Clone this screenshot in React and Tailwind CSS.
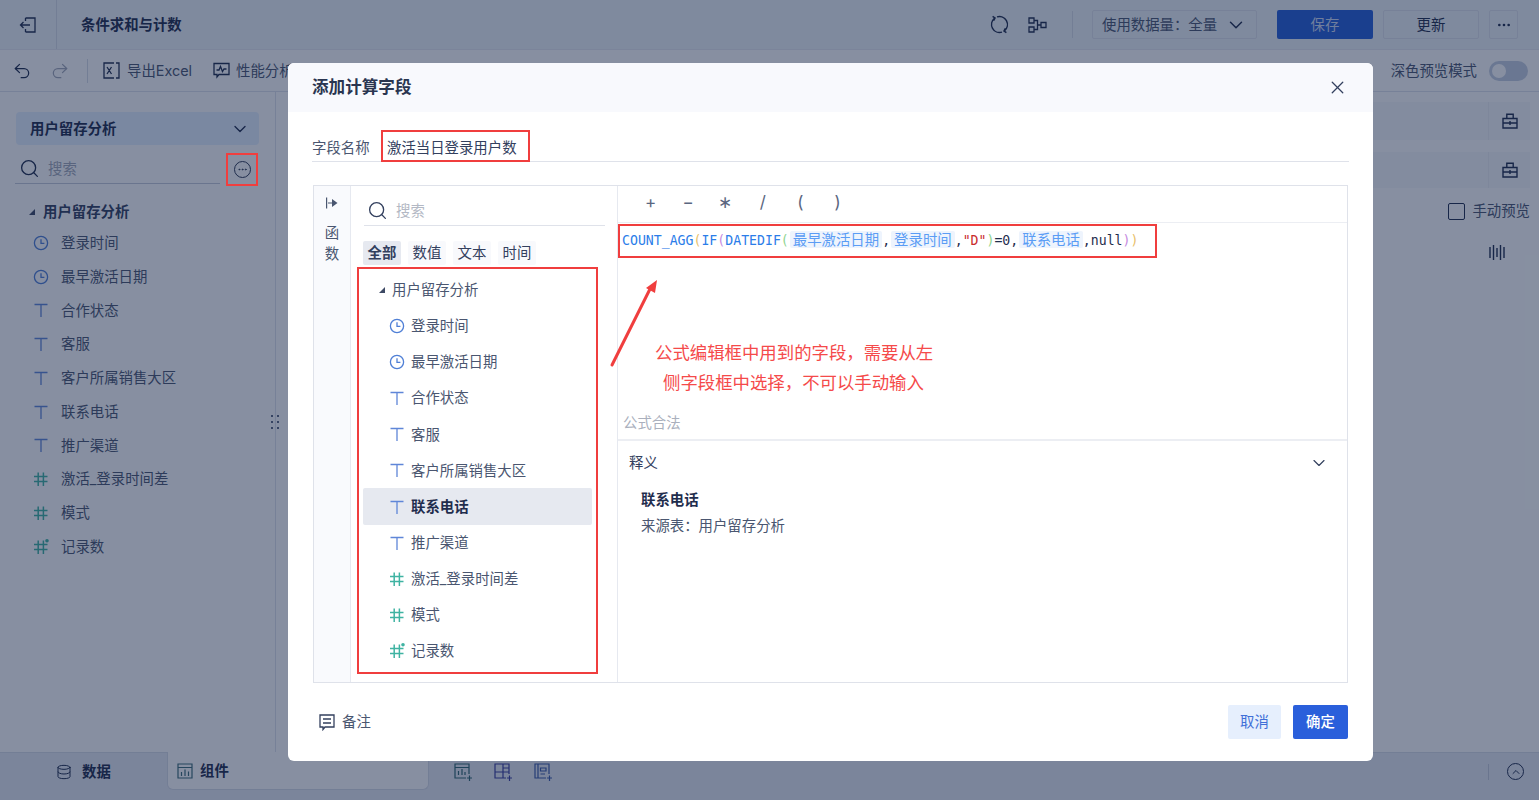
import { Search, ChevronDown, X, Undo2, Redo2, Ellipsis, Database } from "lucide-react";

const fields = [
  { name: "登录时间", type: "time" },
  { name: "最早激活日期", type: "time" },
  { name: "合作状态", type: "text" },
  { name: "客服", type: "text" },
  { name: "客户所属销售大区", type: "text" },
  { name: "联系电话", type: "text" },
  { name: "推广渠道", type: "text" },
  { name: "激活_登录时间差", type: "num" },
  { name: "模式", type: "num" },
  { name: "记录数", type: "calc" },
];

function ClockIcon() {
  return (
    <svg width="16" height="16" viewBox="0 0 16 16" fill="none" stroke="#4f7fd6" strokeWidth="1.3">
      <circle cx="8" cy="8" r="6.6" />
      <path d="M8 4.2V8.4H11.4" />
    </svg>
  );
}

function TextIcon() {
  return (
    <svg width="16" height="16" viewBox="0 0 16 16" fill="none" stroke="#5f86d8" strokeWidth="1.3">
      <path d="M1.5 2.5H14.5M8 2.5V15" />
    </svg>
  );
}

function HashIcon({ dot }) {
  return (
    <svg width="16" height="16" viewBox="0 0 16 16" fill="none" stroke="#3fb3a2" strokeWidth="1.5">
      <path d="M1 5.6H14.5M1 10.6H14.5M5.2 1.5V15M10.4 1.5V15" />
      {dot && <circle cx="14" cy="1.8" r="1.8" fill="#3fb3a2" stroke="none" />}
    </svg>
  );
}

function FieldIcon({ type }) {
  if (type === "time") return <ClockIcon />;
  if (type === "text") return <TextIcon />;
  return <HashIcon dot={type === "calc"} />;
}

function Triangle() {
  return (
    <svg width="8" height="8" viewBox="0 0 8 8" fill="#3d4964">
      <path d="M7 1V7H1Z" />
    </svg>
  );
}

function CardIcon() {
  return (
    <svg width="16" height="16" viewBox="0 0 16 16" fill="none" stroke="#1f2d4d" strokeWidth="1.4">
      <path d="M1 5.5H15V15H1ZM4.8 5.5V1.2H11.2V5.5M1 10H15M8 8V12" />
    </svg>
  );
}

function Sidebar() {
  return (
    <div className="w-[276px] shrink-0 border-r border-[#dfe3ec] pt-[20px] relative">
      <div className="mx-[16px] w-[243px] h-[33px] rounded bg-[#e5f0ff] flex items-center justify-between pl-[14px] pr-[9px] font-semibold text-[#1f2d4d]">
        <span>用户留存分析</span>
        <ChevronDown size={20} strokeWidth={1.6} />
      </div>
      <div className="ml-[15px] mt-[8px] w-[205px] h-[31px] border-b border-[#c5cbd8] flex items-center pl-[4px] pt-[1px] gap-[8px]">
        <Search size={21} strokeWidth={1.5} className="text-[#1f2d4d]" />
        <span className="text-[#a3a9b8]">搜索</span>
      </div>
      <div className="mt-[16px] pl-[28px] flex items-center gap-[7px] h-[24px] font-semibold text-[#33405e]">
        <Triangle />
        <span>用户留存分析</span>
      </div>
      <div className="mt-[2px]">
        {fields.map((f) => (
          <div key={f.name} className="h-[33.75px] flex items-center pl-[33px] gap-[12px] text-[#4a5670]">
            <FieldIcon type={f.type} />
            <span>{f.name}</span>
          </div>
        ))}
      </div>
      <div className="absolute right-[-4px] top-[323px] grid grid-cols-2 gap-x-[4px] gap-y-[4px]">
        {[0, 1, 2, 3, 4, 5].map((i) => (
          <span key={i} className="w-[2px] h-[2px] bg-[#5a6680]" />
        ))}
      </div>
    </div>
  );
}

function RightPanel() {
  return (
    <div className="w-[239px] shrink-0 pt-[10px] pr-[9px]">
      <div className="h-[38px] bg-[#f7f8fb] flex justify-end">
        <div className="w-[42px] border-l border-[#eceef3] flex items-center justify-center">
          <CardIcon />
        </div>
      </div>
      <div className="h-[36px] mt-[12px] bg-[#f7f8fb] flex justify-end">
        <div className="w-[42px] border-l border-[#eceef3] flex items-center justify-center">
          <CardIcon />
        </div>
      </div>
      <div className="h-[28px] mt-[9px] flex items-center justify-end gap-[7px] text-[#4a5670] whitespace-nowrap">
        <span className="w-[17px] h-[17px] border-[1.5px] border-[#1f2d4d] rounded-[2px]" />
        <span>手动预览</span>
      </div>
      <div className="flex justify-end pr-[25px] mt-[19px]">
        <svg width="16" height="17" viewBox="0 0 16 17" fill="none" stroke="#1f2d4d" strokeWidth="1.4">
          <path d="M1 3V14M4.5 1V16M8 4V13M11.5 1V16M15 3V14" />
        </svg>
      </div>
    </div>
  );
}

function Page() {
  return (
    <div className="h-full flex flex-col bg-white">
      {/* top bar */}
      <div className="h-[50px] shrink-0 bg-[#eff4f9] border-b border-[#e6e9f0] flex items-center text-[#1f2d4d]">
        <div className="w-[57px] h-full border-r border-[#d7dce6] flex items-center justify-center">
          <svg width="18" height="18" viewBox="0 0 18 18" fill="none" stroke="#1f2d4d" strokeWidth="1.3">
            <path d="M6.5 2H16V16H6.5M6.5 2V5M6.5 13V16M11 9H1.5M4.5 6L1.5 9L4.5 12" />
          </svg>
        </div>
        <div className="ml-[24px] font-semibold">条件求和与计数</div>
        <div className="ml-auto flex items-center">
          <svg width="19" height="19" viewBox="0 0 19 19" fill="none" stroke="#1f2d4d" strokeWidth="1.5">
            <path d="M7 1.9A8 8 0 0 1 14.5 15.7M12 17.1A8 8 0 0 1 4.5 3.3" />
            <path d="M2.6 1.4L5 3L3.6 5.6M16.4 17.6L14 16L15.4 13.4" />
          </svg>
          <svg className="ml-[19px]" width="19" height="16" viewBox="0 0 19 16" fill="none" stroke="#1f2d4d" strokeWidth="1.3">
            <path d="M1 1H6V6H1ZM1 10H6V15H1ZM13 5.5H18V10.5H13ZM6 3.5H9.5V12.5H6M9.5 8H13" />
          </svg>
          <span className="ml-[25px] w-px h-[27px] bg-[#d7dce6]" />
          <div className="ml-[19px] w-[165px] h-[29px] border border-[#dfe3ec] rounded-[2px] flex items-center justify-between pl-[9px] pr-[9px] text-[#4a5670]">
            <span>使用数据量：全量</span>
            <ChevronDown size={22} strokeWidth={1.6} className="text-[#1f2d4d]" />
          </div>
          <button className="ml-[20px] w-[96px] h-[29px] rounded-[2px] bg-[#255ed9] text-[#cfdcf7]">保存</button>
          <button className="ml-[10px] w-[96px] h-[29px] rounded-[2px] border border-[#dfe3ec]">更新</button>
          <button className="ml-[10px] mr-[21px] w-[29px] h-[29px] rounded-[2px] border border-[#dfe3ec] flex items-center justify-center">
            <Ellipsis size={16} />
          </button>
        </div>
      </div>
      {/* toolbar */}
      <div className="h-[42px] shrink-0 border-b border-[#dfe3ec] flex items-center text-[#4a5670]">
        <Undo2 size={20} strokeWidth={1.5} className="ml-[12px] text-[#1f2d4d]" />
        <Redo2 size={20} strokeWidth={1.5} className="ml-[18px] text-[#a3a9b8]" />
        <span className="ml-[17px] w-px h-[24px] bg-[#d7dce6]" />
        <svg className="ml-[15px]" width="17" height="17" viewBox="0 0 17 17" fill="none" stroke="#1f2d4d" strokeWidth="1.3">
          <path d="M11 1H1V16H11M13 1H16V16H13M4 5L8.5 12M8.5 5L4 12" />
        </svg>
        <span className="ml-[7px]">导出Excel</span>
        <svg className="ml-[21px]" width="17" height="17" viewBox="0 0 17 17" fill="none" stroke="#1f2d4d" strokeWidth="1.3">
          <path d="M1 1.5H16V12.5H6L4 15V12.5H1ZM3.5 8H6L7.5 4.5L9.5 9.5L11 7H13.5" />
        </svg>
        <span className="ml-[6px]">性能分析</span>
        <span className="ml-auto">深色预览模式</span>
        <span className="ml-[12px] mr-[11px] w-[39px] h-[20px] rounded-full bg-[#c5cfe0] flex items-center pl-[3px]">
          <span className="w-[14px] h-[14px] rounded-full bg-white" />
        </span>
      </div>
      {/* body */}
      <div className="flex-1 min-h-0 flex">
        <Sidebar />
        <div className="flex-1" />
        <RightPanel />
      </div>
      {/* bottom tabs */}
      <div className="h-[48px] shrink-0 bg-[#e7eaf3] border-t border-[#d7dce6] flex items-start text-[#1f2d4d] font-semibold">
        <div className="w-[167px] h-[37px] flex items-center justify-center gap-[10px]">
          <Database size={16} strokeWidth={1.5} />
          <span>数据</span>
        </div>
        <div className="w-[262px] h-[38px] -mt-px bg-white border border-t-0 border-[#d7dce6] rounded-b-md flex items-center pl-[9px] gap-[7px]">
          <svg width="16" height="16" viewBox="0 0 16 16" fill="none" stroke="#3d6c78" strokeWidth="1.2">
            <path d="M1 1H15V15H1ZM1 4.5H15M4.5 13V9M8 13V6.5M11.5 13V8.5" />
          </svg>
          <span>组件</span>
        </div>
        <div className="h-[37px] flex items-center gap-[22px] ml-[25px]">
          <svg width="18" height="18" viewBox="0 0 18 18" fill="none" stroke="#2e6670" strokeWidth="1.2">
            <path d="M12 15H1V1H15V11M1 4.5H15M4.5 12V8M8 12V6M11 12V9M13 15H18M15.5 12.5V18" />
          </svg>
          <svg width="18" height="18" viewBox="0 0 18 18" fill="none" stroke="#3b3f9e" strokeWidth="1.2">
            <path d="M12 15H1V1H15V11M9 1V15M1 9H15M9 5H15M13 15H18M15.5 12.5V18" />
          </svg>
          <svg width="18" height="18" viewBox="0 0 18 18" fill="none" stroke="#3a5aa8" strokeWidth="1.2">
            <path d="M12 15H1V1H15V11M4 1V15M6.5 5H12V8H6.5ZM6.5 11H11M13 15H18M15.5 12.5V18" />
          </svg>
        </div>
        <div className="ml-auto h-[37px] flex items-center">
          <span className="w-px h-[16px] bg-[#c5cbd8]" />
          <span className="ml-[18px] mr-[15px] w-[17px] h-[17px] rounded-full border-[1.5px] border-[#1f2d4d] flex items-center justify-center">
            <ChevronDown size={12} strokeWidth={2} className="rotate-180" />
          </span>
        </div>
      </div>
    </div>
  );
}

function Chip({ children }) {
  return <span className="bg-[#eef4fd] text-[#5b9df5] rounded-[2px] px-[3px] ml-[1px] font-['Inter','Noto_Sans_CJK_SC',sans-serif] text-[14.4px]">{children}</span>;
}

function FormulaLine() {
  return (
    <div className="font-['DejaVu_Sans_Mono','Noto_Sans_CJK_SC',monospace] text-[13.2px] text-[#1f2d4d] whitespace-nowrap">
      <span className="text-[#2b7de9]">COUNT_AGG</span>
      <span className="text-[#e8c06a]">(</span>
      <span className="text-[#2b7de9]">IF</span>
      <span className="text-[#c58be0]">(</span>
      <span className="text-[#2b7de9]">DATEDIF</span>
      <span className="text-[#8fd48f]">(</span>
      <Chip>最早激活日期</Chip>
      ,
      <Chip>登录时间</Chip>
      ,<span className="text-[#c92c2c]">"D"</span>
      <span className="text-[#8fd48f]">)</span>=0,
      <Chip>联系电话</Chip>
      ,null
      <span className="text-[#c58be0]">)</span>
      <span className="text-[#e8c06a]">)</span>
    </div>
  );
}

function Modal() {
  return (
    <div className="absolute left-[288px] top-[63px] w-[1085px] h-[698px] bg-white rounded-md flex flex-col overflow-hidden text-[#33405e]">
      <div className="h-[49px] shrink-0 bg-[#f8f9fd] flex items-center justify-between pl-[24px] pr-[25px]">
        <span className="text-[16.6px] font-semibold text-[#2a3550]">添加计算字段</span>
        <X size={21} strokeWidth={1.5} />
      </div>

      {/* field name */}
      <div className="mx-[24px] mt-[18px] h-[32px] flex items-end border-b border-[#dfe2ea]">
        <span className="w-[69px] h-full flex items-center pt-[5px] text-[#4a5670]">字段名称</span>
        <span className="w-[149px] h-[32px] -mb-px border-2 border-[#f03e3e] flex items-center pl-[4px] pt-[4px]">激活当日登录用户数</span>
      </div>

      {/* editor */}
      <div className="mx-[25px] mt-[23px] w-[1035px] h-[498px] border border-[#dfe2ea] flex">
        <div className="w-[37px] shrink-0 bg-[#f9fafd] border-r border-[#e6e9f0] flex flex-col items-center pt-[10px] text-[#4a5670]">
          <svg width="14" height="14" viewBox="0 0 14 14" fill="#4a5670">
            <path d="M1 1.5H2.2V12.5H1ZM3 6.4H7V3L12.5 7L7 11V7.6H3Z" />
          </svg>
          <span className="mt-[12px] leading-[21px] w-[15px] text-center">函数</span>
        </div>

        <div className="w-[267px] shrink-0 border-r border-[#e6e9f0] relative">
          <div className="ml-[13px] mt-[8px] w-[241px] h-[32px] border-b border-[#dfe2ea] flex items-center pl-[3px] pt-[2px] gap-[8px]">
            <Search size={21} strokeWidth={1.5} />
            <span className="text-[#b3b8c4]">搜索</span>
          </div>
          <div className="ml-[12px] mt-[15px] flex gap-[7px]">
            <span className="w-[38px] h-[24px] rounded-[2px] bg-[#e6e9f0] flex items-center justify-center font-semibold">全部</span>
            <span className="w-[38px] h-[24px] rounded-[2px] bg-[#f8f9fc] flex items-center justify-center">数值</span>
            <span className="w-[38px] h-[24px] rounded-[2px] bg-[#f8f9fc] flex items-center justify-center">文本</span>
            <span className="w-[38px] h-[24px] rounded-[2px] bg-[#f8f9fc] flex items-center justify-center">时间</span>
          </div>
          <div className="ml-[6px] mt-[2px] w-[241px] h-[407px] border-2 border-[#f03e3e] pl-[4px] pr-[4px]">
            <div className="h-[39px] flex items-center pl-[15px] pt-[2px] gap-[6px] text-[#4a5670]">
              <Triangle />
              <span>用户留存分析</span>
            </div>
            {fields.map((f) => (
              <div
                key={f.name}
                className={
                  f.name === "联系电话"
                    ? "h-[36.1px] flex items-center pl-[26px] gap-[6px] rounded-[2px] bg-[#e6e9f0] font-semibold text-[#1f2d4d]"
                    : "h-[36.1px] flex items-center pl-[26px] gap-[6px] text-[#4a5670]"
                }
              >
                <FieldIcon type={f.type} />
                <span>{f.name}</span>
              </div>
            ))}
          </div>
        </div>

        <div className="flex-1 min-w-0 flex flex-col">
          <div className="h-[37px] shrink-0 border-b border-[#eceef3] flex items-center pl-[14px] pb-[3px] text-[#5a6680]">
            {["+", "−", "∗", "/", "(", ")"].map((op) => (
              <span key={op} className="w-[37.4px] text-center text-[17px]">{op}</span>
            ))}
          </div>
          <div className="mt-[1px] w-[539px] h-[34px] border-2 border-[#f03e3e] flex items-center pl-[2px] pb-[2px]">
            <FormulaLine />
          </div>
          <div className="mt-[152px] pl-[5px] h-[26px] flex items-center text-[#aab0bd]">公式合法</div>
          <div className="mt-[3px] border-t-2 border-[#eceef3] flex-1 pl-[11px] pr-[18px]">
            <div className="h-[42px] pt-[2px] flex items-center justify-between">
              <span>释义</span>
              <ChevronDown size={20} strokeWidth={1.4} />
            </div>
            <div className="pl-[12px] mt-[4px]">
              <div className="font-semibold text-[#1f2d4d] leading-[26px]">联系电话</div>
              <div className="leading-[26px] text-[#4a5670]">来源表：用户留存分析</div>
            </div>
          </div>
        </div>
      </div>

      {/* footer */}
      <div className="flex-1 flex items-center pl-[31px] pr-[25px]">
        <svg width="16" height="17" viewBox="0 0 16 17" fill="none" stroke="#33405e" strokeWidth="1.3">
          <path d="M1 1H15V13H6L4 15.5V13H1ZM4 5H12M4 9H12" />
        </svg>
        <span className="ml-[7px] text-[#4a5670]">备注</span>
        <button className="ml-auto w-[53px] h-[34px] rounded-[2px] bg-[#e6effd] text-[#3f6fd8]">取消</button>
        <button className="ml-[12px] w-[55px] h-[34px] rounded-[2px] bg-[#2a5fdb] text-white font-medium">确定</button>
      </div>

      {/* annotations */}
      <svg className="absolute left-[320px] top-[212px]" width="52" height="94" viewBox="0 0 52 94" fill="none">
        <path d="M4 90L43 12" stroke="#f03e3e" strokeWidth="3" strokeLinecap="round" />
        <path d="M49 5L38 13L47 18Z" fill="#f03e3e" />
      </svg>
      <div className="absolute left-[367px] top-[279px] text-[17.4px] leading-[22px] text-[#f54a4a] whitespace-nowrap">公式编辑框中用到的字段，需要从左</div>
      <div className="absolute left-[375px] top-[309px] text-[17.4px] leading-[22px] text-[#f54a4a] whitespace-nowrap">侧字段框中选择，不可以手动输入</div>
    </div>
  );
}

export default function App() {
  return (
    <div className="relative w-[1539px] h-[800px] overflow-hidden text-[14.4px] font-['Inter','Noto_Sans_CJK_SC',sans-serif]">
      <Page />
      <div className="absolute inset-0 bg-[#0f2043]/50" />
      <Modal />
      {/* annotation over the sidebar's more button */}
      <div className="absolute left-[226px] top-[153px] w-[32px] h-[33px] border-2 border-[#f03e3e] flex items-center justify-center">
        <span className="w-[17px] h-[17px] rounded-full border-[1.3px] border-[#1f2d4d] flex items-center justify-center">
          <Ellipsis size={11} className="text-[#1f2d4d]" />
        </span>
      </div>
    </div>
  );
}
